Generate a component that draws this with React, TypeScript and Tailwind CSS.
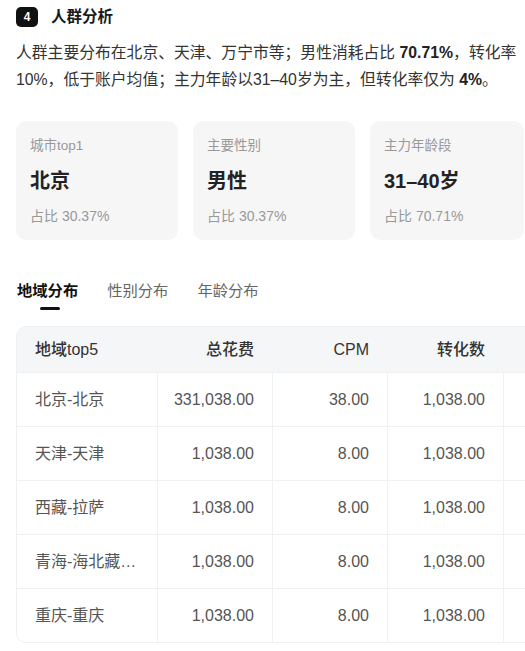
const STATS = [
  { label: "城市top1", value: "北京", ratio: "占比 30.37%", w: "w-[162px]" },
  { label: "主要性别", value: "男性", ratio: "占比 30.37%", w: "w-[162px]" },
  { label: "主力年龄段", value: "31–40岁", ratio: "占比 70.71%", w: "w-[154px]" },
];

const TABS = ["地域分布", "性别分布", "年龄分布"];

const ROWS = [
  { region: "北京-北京", cost: "331,038.00", cpm: "38.00", conv: "1,038.00" },
  { region: "天津-天津", cost: "1,038.00", cpm: "8.00", conv: "1,038.00" },
  { region: "西藏-拉萨", cost: "1,038.00", cpm: "8.00", conv: "1,038.00" },
  { region: "青海-海北藏族自治州", cost: "1,038.00", cpm: "8.00", conv: "1,038.00" },
  { region: "重庆-重庆", cost: "1,038.00", cpm: "8.00", conv: "1,038.00" },
];

const COLS = "grid grid-cols-[140px_115px_115px_116px_116px]";

export default function App() {
  return (
    <div className="w-[525px] h-[651px] overflow-hidden bg-white font-['Liberation_Sans','Noto_Sans_CJK_SC',sans-serif] text-[#222]">
      {/* Section title */}
      <div className="flex items-center gap-[13px] pl-4 pt-[7px]">
        <div className="flex h-5 w-[22px] items-center justify-center rounded-[5px] bg-[#111] text-[12px] font-bold text-white">
          4
        </div>
        <span className="text-[15.5px] font-bold leading-5 text-[#1a1a1a]">人群分析</span>
      </div>

      {/* Summary */}
      <p className="mt-3 whitespace-nowrap pl-4 text-[15.8px] leading-[27px] text-[#333]">
        人群主要分布在北京、天津、万宁市等；男性消耗占比 <b className="font-bold text-[#222]">70.71%</b>，转化率
        <br />
        10%，低于账户均值；主力年龄以31–40岁为主，但转化率仅为 <b className="font-bold text-[#222]">4%</b>。
      </p>

      {/* Stat cards */}
      <div className="mt-[28px] flex gap-[15px] pl-4">
        {STATS.map((s) => (
          <div
            key={s.label}
            className={`${s.w} h-[119px] shrink-0 rounded-[10px] bg-[#f6f6f7] px-[14px] pt-[16px]`}
          >
            <div className="text-[13.5px] leading-[18px] text-[#999]">{s.label}</div>
            <div className="mt-3 text-[20px] font-bold leading-7 text-[#222]">{s.value}</div>
            <div className="mt-3 text-[14px] leading-[18px] text-[#999]">{s.ratio}</div>
          </div>
        ))}
      </div>

      {/* Tabs */}
      <div className="mt-10 flex gap-[29px] pl-[17px]">
        {TABS.map((t, i) => (
          <div key={t} className="flex flex-col items-center">
            <span
              className={
                i === 0
                  ? "text-[15.3px] font-bold leading-[22px] text-[#111]"
                  : "text-[15.3px] leading-[22px] text-[#666]"
              }
            >
              {t}
            </span>
            <span
              className={
                i === 0
                  ? "mt-[5px] ml-1 h-[3px] w-5 rounded-full bg-[#111]"
                  : "mt-[5px] h-[3px] w-5"
              }
            />
          </div>
        ))}
      </div>

      {/* Table */}
      <div className="ml-4 mt-4 w-[602px] overflow-hidden rounded-[10px] border border-[#eef0f2]">
        <div className={`${COLS} h-[45px] items-center bg-[#f5f6f8] text-[16px] font-medium text-[#333]`}>
          <div className="pl-[18px]">地域top5</div>
          <div className="pr-[18px] text-right">总花费</div>
          <div className="pr-[18px] text-right">CPM</div>
          <div className="pr-[18px] text-right">转化数</div>
          <div />
        </div>
        {ROWS.map((r) => (
          <div key={r.region} className={`${COLS} h-[54px] border-t border-[#f0f1f3] text-[16px] text-[#555]`}>
            <div className="flex items-center pl-[18px] pr-[12px]">
              <span className="truncate">{r.region}</span>
            </div>
            <div className="flex items-center justify-end border-l border-[#f0f1f3] pr-[18px]">{r.cost}</div>
            <div className="flex items-center justify-end border-l border-[#f0f1f3] pr-[18px]">{r.cpm}</div>
            <div className="flex items-center justify-end border-l border-[#f0f1f3] pr-[18px]">{r.conv}</div>
            <div className="border-l border-[#f0f1f3]" />
          </div>
        ))}
      </div>
    </div>
  );
}
